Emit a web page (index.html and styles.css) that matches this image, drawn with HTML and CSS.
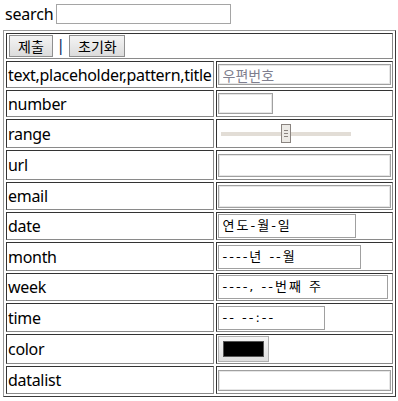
FILE: index.html
```html
<!DOCTYPE html>
<html lang="ko">
<head>
<meta charset="utf-8">
<link rel="stylesheet" href="styles.css">
</head>
<body>
<form class="form">
  <div class="search-row">
    <label class="search-label">search</label>
    <input class="search-input" type="text">
  </div>
  <table class="grid">
    <tr class="r-btn">
      <td colspan="2">
        <div class="btn-bar">
          <button type="button" class="btn btn-submit">제출</button>
          <span class="sep">|</span>
          <button type="button" class="btn btn-reset">초기화</button>
        </div>
      </td>
    </tr>
    <tr class="h25"><td class="lab">text,placeholder,pattern,title</td><td class="val"><input class="box w-full" type="text" placeholder="우편번호"></td></tr>
    <tr class="h25"><td class="lab">number</td><td class="val"><input class="box w-num" type="text"></td></tr>
    <tr class="h27"><td class="lab">range</td><td class="val"><div class="range"><div class="track"></div><div class="thumb"><i></i><i></i><i></i></div></div></td></tr>
    <tr class="h28"><td class="lab">url</td><td class="val"><input class="box w-full tall" type="text"></td></tr>
    <tr class="h26"><td class="lab">email</td><td class="val"><input class="box w-full tall" type="text"></td></tr>
    <tr class="h26"><td class="lab">date</td><td class="val"><div class="box dt w-date">연도-월-일</div></td></tr>
    <tr class="h27"><td class="lab">month</td><td class="val"><div class="box dt w-month">----년 --월</div></td></tr>
    <tr class="h26"><td class="lab">week</td><td class="val"><div class="box dt w-week">----, --번째 주</div></td></tr>
    <tr class="h27"><td class="lab">time</td><td class="val"><div class="box dt w-time">-- --:--</div></td></tr>
    <tr class="h28"><td class="lab">color</td><td class="val"><button type="button" class="color-btn"><span class="swatch"></span></button></td></tr>
    <tr class="h26"><td class="lab">datalist</td><td class="val"><input class="box w-full" type="text"></td></tr>
  </table>
</form>
</body>
</html>
```
FILE: styles.css
```css
html, body {
  margin: 0;
  padding: 0;
  background: #fff;
}
body {
  padding: 3px;
  font-family: "Noto Sans", "Noto Sans CJK KR", sans-serif;
  font-size: 16px;
  color: #000;
}
.form { margin: 0; }
.search-row {
  display: flex;
  align-items: center;
  height: 22px;
  padding-left: 2px;
}
.search-label {
  line-height: 22px;
  margin-right: 3px;
  letter-spacing: -0.2px;
}
.search-input {
  width: 175px;
  height: 20px;
  box-sizing: border-box;
  border: 1px solid #a5a5a5;
  margin: 0;
  padding: 0;
}
.grid {
  margin-top: 5px;
  border-collapse: separate;
  border-spacing: 2px;
  border: 1px solid;
  border-color: #9a9a9a #3a3a3a #3a3a3a #9a9a9a;
  width: 392px;
  box-sizing: border-box;
}
.grid td {
  border: 1px solid;
  border-color: #333 #8a8a8a #8a8a8a #333;
  padding: 0 1px;
  vertical-align: middle;
}
.r-btn td { height: 24px; padding: 0 2px; }
.h25 td { height: 25px; }
.h26 td { height: 26px; }
.h27 td { height: 27px; }
.h28 td { height: 28px; }
.lab {
  width: 204px;
  white-space: nowrap;
  font-size: 16px;
  line-height: 20px;
  letter-spacing: -0.3px;
}
.btn-bar {
  display: flex;
  align-items: center;
}
.btn {
  font-family: "Noto Sans CJK KR", sans-serif;
  font-size: 14px;
  height: 22px;
  padding: 0;
  margin: 0;
  border: 1px solid #8f8f8f;
  border-radius: 0;
  background: linear-gradient(#f4f4f4, #dcdcdc);
  color: #000;
  line-height: 18px;
}
.btn-submit { width: 44px; }
.btn-reset { width: 56px; }
.sep {
  font-family: "DejaVu Sans", sans-serif;
  font-size: 16px;
  line-height: 20px;
  color: #1a3a6a;
  margin: 0 6px 0 5px;
}
.box {
  display: block;
  box-sizing: border-box;
  height: 21px;
  margin: 0;
  border: 1px solid #a0a0a0;
  box-shadow: inset 0 0 0 1px #e6e6e6;
  padding: 0 4px;
  font-family: "Noto Sans CJK KR", sans-serif;
  font-size: 14px;
  background: #fff;
}
.box.tall { height: 23px; }
.box::placeholder { color: #7f7f8f; }
.w-full { width: 173px; }
.w-num { width: 55px; }
.dt {
  height: 24px;
  line-height: 22px;
  font-family: "DejaVu Sans", "Noto Sans CJK KR", sans-serif;
  font-size: 13px;
  letter-spacing: 2px;
  padding-left: 4px;
  box-shadow: none;
  white-space: nowrap;
}
.w-date { width: 138px; }
.w-month { width: 143px; }
.w-week { width: 170px; }
.w-time { width: 107px; }
.range {
  position: relative;
  width: 130px;
  height: 20px;
  margin-left: 3px;
  display: flex;
  align-items: center;
}
.track {
  width: 100%;
  height: 4px;
  background: #e2ddd6;
}
.thumb {
  position: absolute;
  left: 60px;
  top: 0;
  width: 10px;
  height: 19px;
  box-sizing: border-box;
  border: 1px solid #8a8480;
  background: #eceae6;
  display: flex;
  flex-direction: column;
  align-items: center;
  justify-content: center;
  gap: 2px;
}
.thumb i {
  display: block;
  width: 4px;
  height: 1px;
  background: #8a8480;
}
.color-btn {
  display: flex;
  align-items: center;
  justify-content: center;
  width: 51px;
  height: 26px;
  margin: 0;
  padding: 0;
  border: 1px solid #b0b0b0;
  background: linear-gradient(#f6f6f6, #dedede);
}
.swatch {
  display: block;
  width: 39px;
  height: 14px;
  background: #000;
  border: 1px solid #555;
}
```
